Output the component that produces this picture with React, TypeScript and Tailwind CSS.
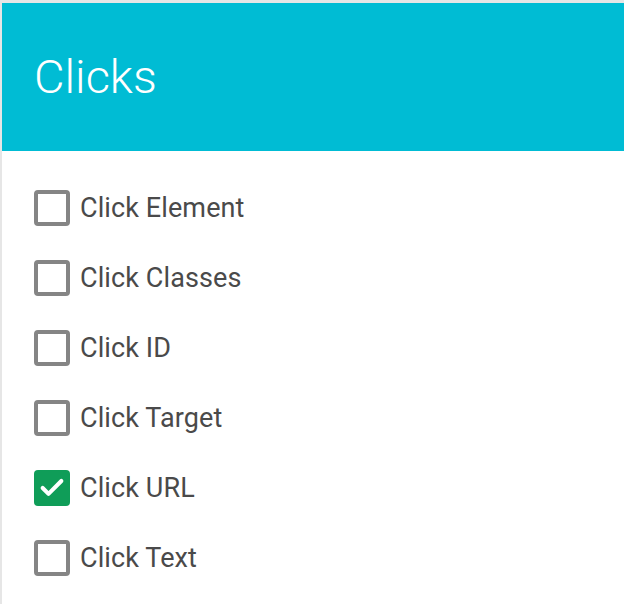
import { Check } from 'lucide-react'

const items = [
  { label: 'Click Element', checked: false },
  { label: 'Click Classes', checked: false },
  { label: 'Click ID', checked: false },
  { label: 'Click Target', checked: false },
  { label: 'Click URL', checked: true },
  { label: 'Click Text', checked: false },
]

export default function App() {
  return (
    <div className="w-[624px] h-[604px] bg-[#e6e6e6] pt-[3px] pl-[2px] overflow-hidden" style={{ fontFamily: 'Roboto, "Liberation Sans", sans-serif' }}>
      <div className="h-full bg-white">
        <div className="h-[148px] bg-[#00bcd4] flex items-center pl-[32px]">
          <h1 className="text-[47px] font-light text-white leading-none pb-[2px]">Clicks</h1>
        </div>
        <ul className="pt-[22px]">
          {items.map(item => (
            <li key={item.label} className="h-[70px] flex items-center pl-[32px]">
              {item.checked ? (
                <span className="w-[36px] h-[36px] rounded-[4px] bg-[#0f9d58] flex items-center justify-center shrink-0">
                  <Check size={28} strokeWidth={3.5} className="text-white" />
                </span>
              ) : (
                <span className="w-[36px] h-[36px] rounded-[4px] border-[4px] border-[#858585] bg-white shrink-0" />
              )}
              <span className="ml-[10px] text-[27px] text-[#4a4a4a] tracking-[0.1px]">{item.label}</span>
            </li>
          ))}
        </ul>
      </div>
    </div>
  )
}
